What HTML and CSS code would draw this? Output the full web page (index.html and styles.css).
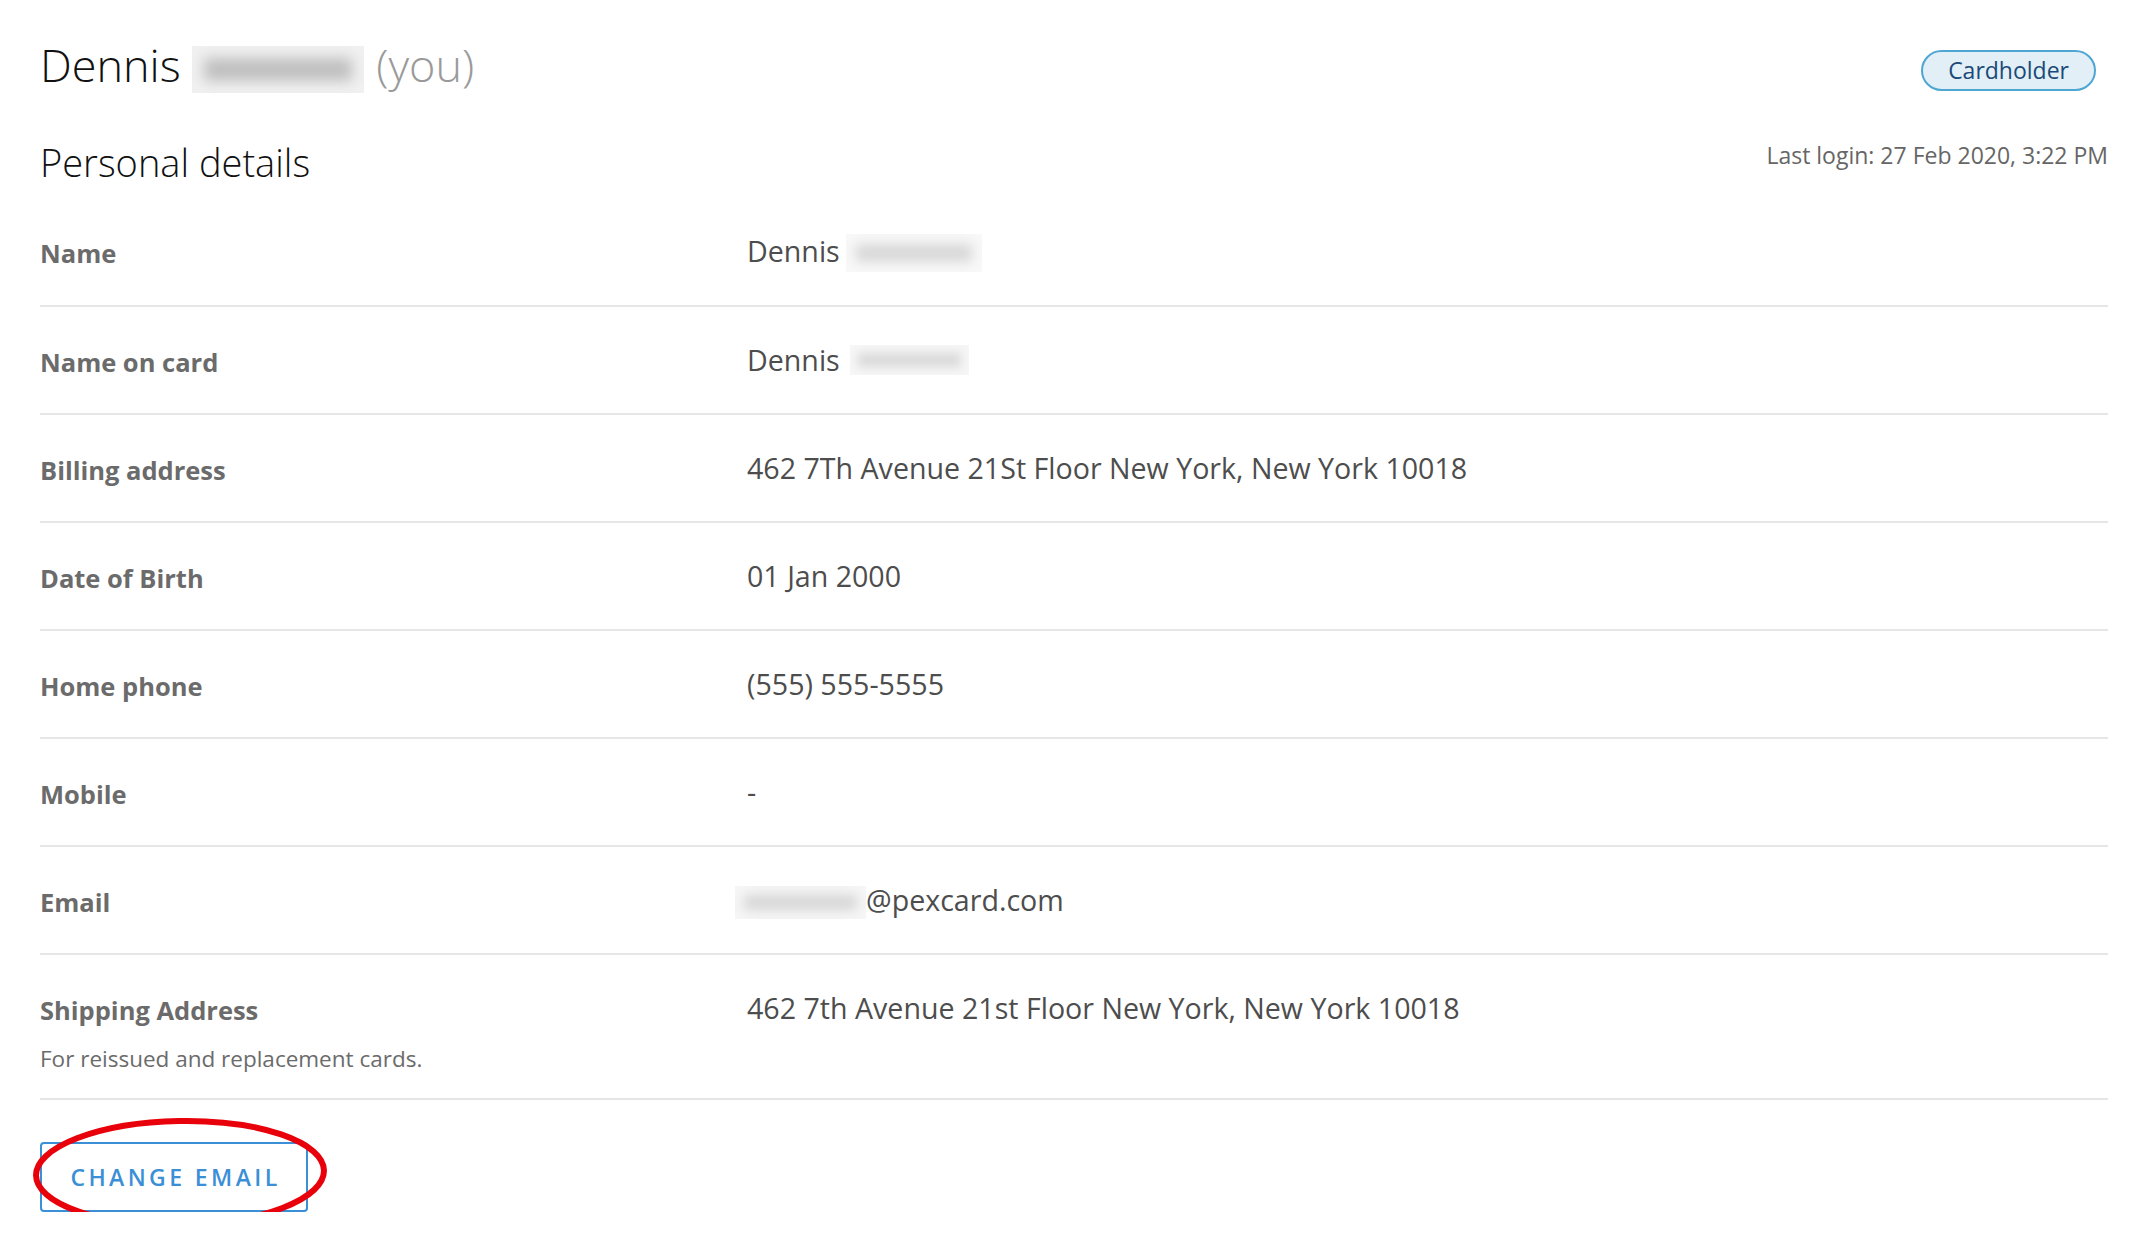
FILE: index.html
```html
<!DOCTYPE html>
<html lang="en">
<head>
<meta charset="utf-8">
<title>Personal details</title>
<link rel="stylesheet" href="styles.css">
</head>
<body>
<div class="page">
  <header class="header">
    <h1 class="title">Dennis <span class="blur blur-title"></span> <span class="you">(you)</span></h1>
    <span class="badge">Cardholder</span>
  </header>

  <div class="section-head">
    <h2 class="section-title">Personal details</h2>
    <div class="last-login">Last login: 27 Feb 2020, 3:22 PM</div>
  </div>

  <div class="rows">
    <div class="row">
      <div class="label">Name</div>
      <div class="value">Dennis <span class="blur blur-name"></span></div>
    </div>
    <div class="row">
      <div class="label">Name on card</div>
      <div class="value">Dennis <span class="blur blur-card"></span></div>
    </div>
    <div class="row">
      <div class="label">Billing address</div>
      <div class="value">462 7Th Avenue 21St Floor New York, New York 10018</div>
    </div>
    <div class="row">
      <div class="label">Date of Birth</div>
      <div class="value">01 Jan 2000</div>
    </div>
    <div class="row">
      <div class="label">Home phone</div>
      <div class="value">(555) 555-5555</div>
    </div>
    <div class="row">
      <div class="label">Mobile</div>
      <div class="value">-</div>
    </div>
    <div class="row">
      <div class="label">Email</div>
      <div class="value"><span class="blur blur-email"></span>@pexcard.com</div>
    </div>
    <div class="row row-tall">
      <div class="label">Shipping Address
        <div class="hint">For reissued and replacement cards.</div>
      </div>
      <div class="value">462 7th Avenue 21st Floor New York, New York 10018</div>
    </div>
  </div>

  <div class="actions">
    <button class="btn-outline" type="button">CHANGE EMAIL</button>
    <svg class="annotation" width="304" height="120" viewBox="0 0 304 120" aria-hidden="true">
      <ellipse cx="152" cy="60" rx="144" ry="52" fill="none" stroke="#e8000a" stroke-width="6" transform="rotate(-1 152 60)"/>
    </svg>
  </div>
</div>
</body>
</html>
```
FILE: styles.css
```css
html, body {
  margin: 0;
  padding: 0;
  background: #ffffff;
}

body {
  font-family: "Open Sans", "Lato", sans-serif;
  color: #4d4d4d;
}

.page {
  padding: 35px 34px 0 40px;
}

/* Header */
.header {
  display: flex;
  justify-content: space-between;
  align-items: flex-start;
}

.title {
  margin: 0;
  font-weight: 300;
  font-size: 45px;
  line-height: 60px;
  color: #111111;
}

.you {
  color: #9a9a9a;
}

.badge {
  margin-top: 15px;
  margin-right: 12px;
  height: 41px;
  box-sizing: border-box;
  padding: 0 25px;
  border: 2px solid #4ea6d3;
  border-radius: 21px;
  background: #e2eff6;
  color: #1b4a78;
  font-size: 23px;
  line-height: 37px;
}

/* blurred redactions */
.blur {
  display: inline-block;
  background: #c6c6c6;
}

.blur-title {
  width: 172px;
  height: 47px;
  vertical-align: -11px;
  background: #bfbfbf;
  box-shadow: inset 0 0 14px 12px #f1f1f1;
}

.blur-name {
  width: 136px;
  height: 38px;
  vertical-align: -10px;
  margin-left: -1px;
  background: #d8d8d8;
  box-shadow: inset 0 0 12px 10px #f8f8f8;
}

.blur-card {
  width: 119px;
  height: 30px;
  vertical-align: -4px;
  margin-left: 3px;
  background: #dadada;
  box-shadow: inset 0 0 10px 8px #f6f6f6;
}

.blur-email {
  width: 131px;
  height: 33px;
  vertical-align: -8px;
  margin-left: -12px;
  background: #d6d6d6;
  box-shadow: inset 0 0 12px 9px #f6f6f6;
}

/* Section head */
.section-head {
  display: flex;
  justify-content: space-between;
  align-items: flex-start;
  margin-top: 42px;
  margin-bottom: 11px;
}

.section-title {
  margin: 0;
  font-weight: 300;
  font-size: 38px;
  line-height: 50px;
  color: #111111;
}

.last-login {
  margin-top: 3px;
  font-size: 23px;
  line-height: 30px;
  color: #666666;
}

/* Rows */
.row {
  display: grid;
  grid-template-columns: 707px 1fr;
  align-items: start;
  padding: 33px 0;
  border-bottom: 2px solid #e6e6e6;
}

.row-tall {
  padding-bottom: 24px;
}

.label {
  padding-top: 4px;
  font-weight: 700;
  font-size: 25.5px;
  line-height: 36px;
  color: #6b6b6b;
}

.value {
  font-size: 28.6px;
  line-height: 40px;
  color: #4d4d4d;
}

.hint {
  margin-top: 16px;
  font-weight: 400;
  font-size: 22.5px;
  line-height: 30px;
  color: #6b6b6b;
}

/* Actions */
.actions {
  position: relative;
  margin-top: 42px;
  width: 268px;
}

.btn-outline {
  display: block;
  width: 268px;
  height: 70px;
  box-sizing: border-box;
  padding: 0 0 0 3px;
  border: 2px solid #3b8fd6;
  border-radius: 4px;
  background: #ffffff;
  color: #3b8fd6;
  font-family: "Open Sans", "Lato", sans-serif;
  font-weight: 600;
  font-size: 23px;
  letter-spacing: 3.4px;
  line-height: 66px;
  text-align: center;
}

.annotation {
  position: absolute;
  left: -12px;
  top: -29px;
  pointer-events: none;
}
```
